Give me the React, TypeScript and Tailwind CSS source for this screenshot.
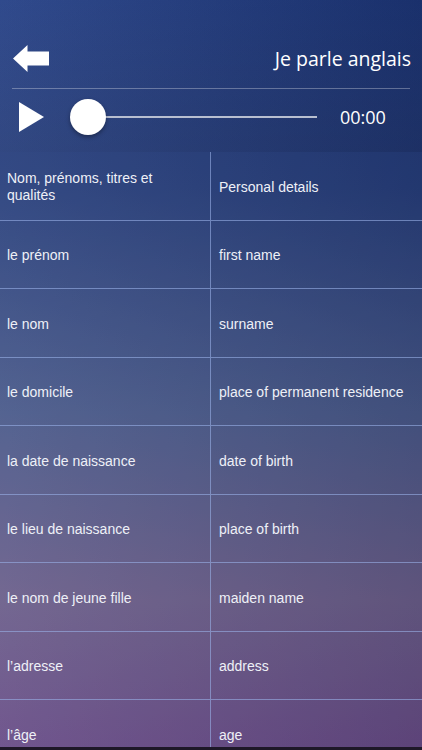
import React from "react";

const rows: [string, string][] = [
  ["Nom, prénoms, titres et qualités", "Personal details"],
  ["le prénom", "first name"],
  ["le nom", "surname"],
  ["le domicile", "place of permanent residence"],
  ["la date de naissance", "date of birth"],
  ["le lieu de naissance", "place of birth"],
  ["le nom de jeune fille", "maiden name"],
  ["l’adresse", "address"],
  ["l’âge", "age"],
];

function BackArrow() {
  return (
    <svg width="37" height="28" viewBox="0 0 37 28" className="block">
      <path d="M0 13.5 L14.5 0 L14.5 6.5 L36 6.5 L36 20.5 L14.5 20.5 L14.5 27 Z" fill="white" />
    </svg>
  );
}

function PlayIcon() {
  return (
    <svg width="25" height="30" viewBox="0 0 25 30" className="block">
      <path d="M0 0 L25 15 L0 30 Z" fill="white" />
    </svg>
  );
}

export default function App() {
  return (
    <div className="relative w-[422px] h-[750px] overflow-hidden bg-[linear-gradient(90deg,rgba(255,255,255,0.08)_0%,rgba(0,0,0,0.12)_100%),linear-gradient(180deg,#22408a_0%,#2f4a8c_25%,#5a6c9e_55%,#85729e_80%,#815a9a_100%)]">
      {/* header */}
      <div className="h-[152px] px-3 pt-[44px] bg-[linear-gradient(160deg,rgba(20,30,80,0.1)_0%,rgba(10,20,60,0.35)_100%)]">
        <div className="flex items-center justify-between h-[30px]">
          <div className="pl-px">
            <BackArrow />
          </div>
          <span className="text-white text-[19.5px] font-['Open_Sans',sans-serif] -mr-px">Je parle anglais</span>
        </div>
        <div className="mt-[14px] h-px bg-white/30" />
        <div className="flex items-center h-[56px]">
          <div className="pl-[7px] w-[58px]">
            <PlayIcon />
          </div>
          <div className="relative w-[247px] h-[36px] flex items-center">
            <div className="absolute left-[18px] right-0 h-[2px] bg-[#b8bfd0]" />
            <div className="relative w-[36px] h-[36px] rounded-full bg-white shadow-[0_2px_4px_rgba(0,0,0,0.35)]" />
          </div>
          <span className="ml-[23px] text-white text-[18px] font-['Open_Sans',sans-serif]">00:00</span>
        </div>
      </div>

      {/* table */}
      <div className="font-['Liberation_Sans',Arial,sans-serif] text-[14px] leading-[17px] text-[#eef0f7]">
        {rows.map(([fr, en], i) => (
          <div
            key={i}
            className="grid grid-cols-[211px_1fr] h-[68.5px] border-b-[1.5px] border-[#9ab0e8]/60 bg-[#0a1440]/20"
          >
            <div className="flex items-center pl-[7px] pr-3 pt-[3px] border-r-[1.5px] border-[#9ab0e8]/60">{fr}</div>
            <div className="flex items-center pl-[8px] pr-2 pt-[3px]">{en}</div>
          </div>
        ))}
      </div>

      <div className="absolute left-0 right-0 bottom-0 h-[3px] bg-[#1e1828]" />
    </div>
  );
}
